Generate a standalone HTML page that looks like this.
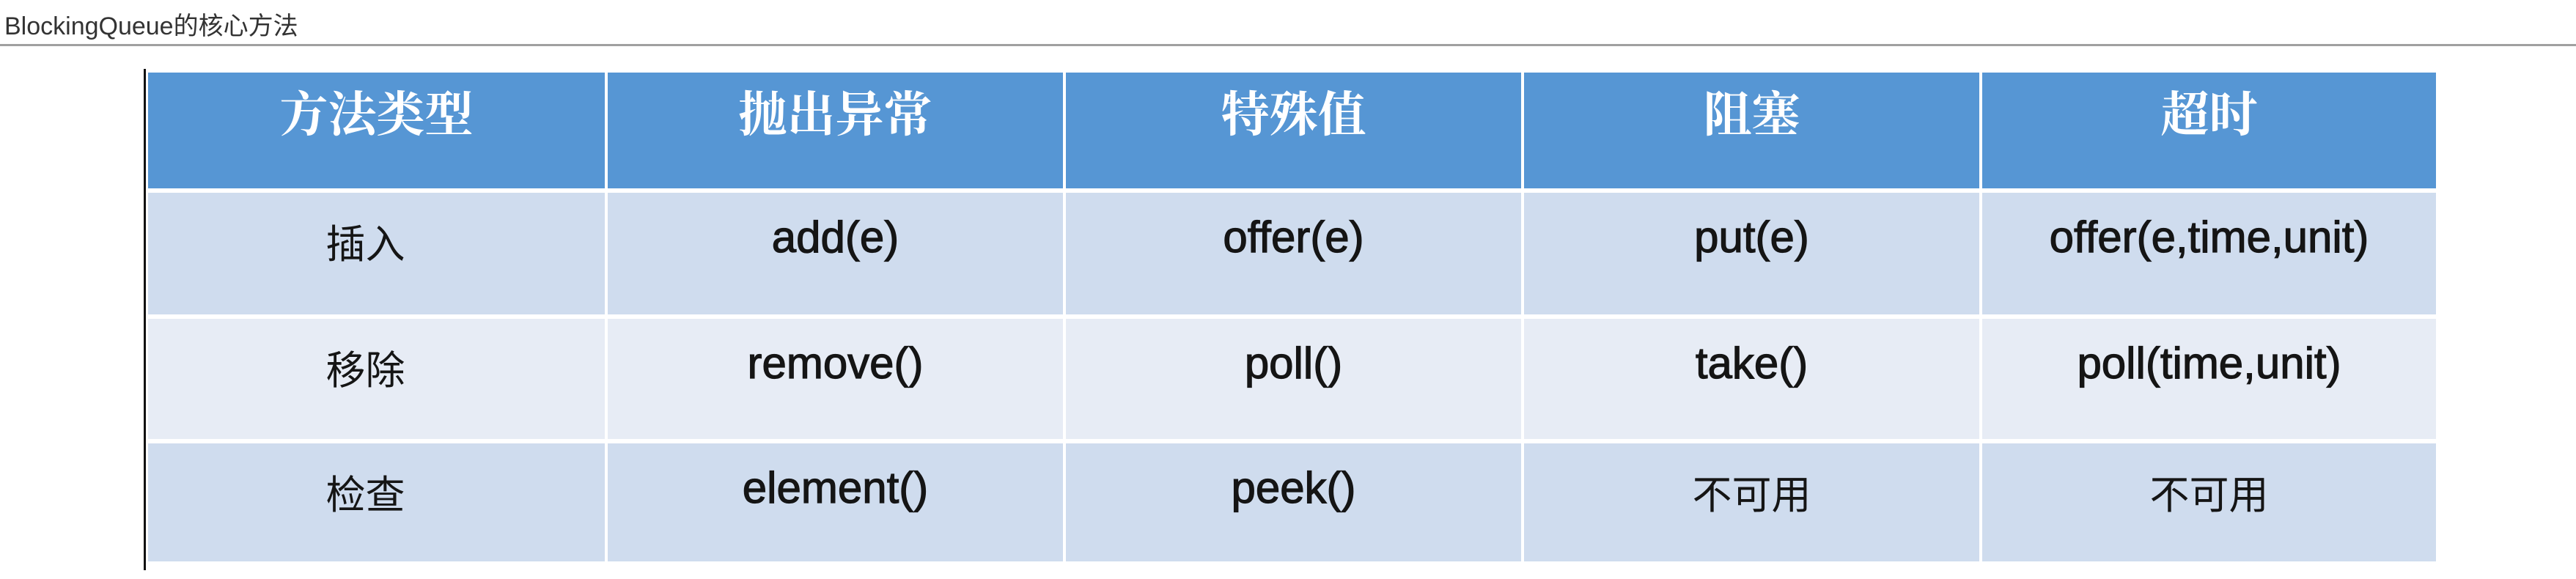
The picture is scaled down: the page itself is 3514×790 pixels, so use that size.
<!DOCTYPE html>
<html><head><meta charset="utf-8"><style>
body{margin:0;width:3514px;height:790px;background:#fff;position:relative;overflow:hidden;font-family:"Liberation Sans","Noto Sans CJK SC",sans-serif}
.t{position:absolute;left:6px;top:8px;font-size:34px;color:#333}
.hl{position:absolute;left:0;top:60px;width:3514px;height:3px;background:#a0a0a0}
.vl{position:absolute;left:196px;top:94px;width:3px;height:684px;background:#111}
.c{position:absolute;display:flex;justify-content:center;align-items:flex-start;box-sizing:border-box;color:#151515}
.h{background:#5696d4;color:#fff;font-family:"Liberation Serif","Noto Serif CJK SC",serif;font-size:66px;font-weight:bold;padding-top:4px}
.r1{background:#cfdcee}.r2{background:#e7ecf5}
.b{font-size:60px;-webkit-text-stroke:1.2px #151515;padding-top:26px}
.z{font-size:54px;padding-top:26px}
</style></head><body>
<div class="t">BlockingQueue的核心方法</div>
<div class="hl"></div>
<div class="vl"></div>
<div id="g"></div>
<script>
var X=[202,827,1452,2077,2702,3323],Y=[99,260,432,602,766];
var d=[["方法类型","抛出异常","特殊值","阻塞","超时"],
["插入","add(e)","offer(e)","put(e)","offer(e,time,unit)"],
["移除","remove()","poll()","take()","poll(time,unit)"],
["检查","element()","peek()","不可用","不可用"]];
var h="";
for(var r=0;r<4;r++)for(var c=0;c<5;c++){
var cls=r==0?"h":(r==2?"r2":"r1");
var txt=d[r][c];var cjk=/[\u4e00-\u9fff]/.test(txt);
if(r>0)cls+=cjk?" z":" b";
var x=X[c]+(c?2:0),w=X[c+1]-x-(c<4?2:0),y=Y[r]+(r?3:0),hh=Y[r+1]-y-(r<3?3:0);
var st=(c==0&&r>0)?'padding-right:30px;':'';
h+='<div class="c '+cls+'" style="'+st+'left:'+x+'px;top:'+y+'px;width:'+w+'px;height:'+hh+'px">'+txt+'</div>';}
document.getElementById("g").innerHTML=h;
</script>
</body></html>
